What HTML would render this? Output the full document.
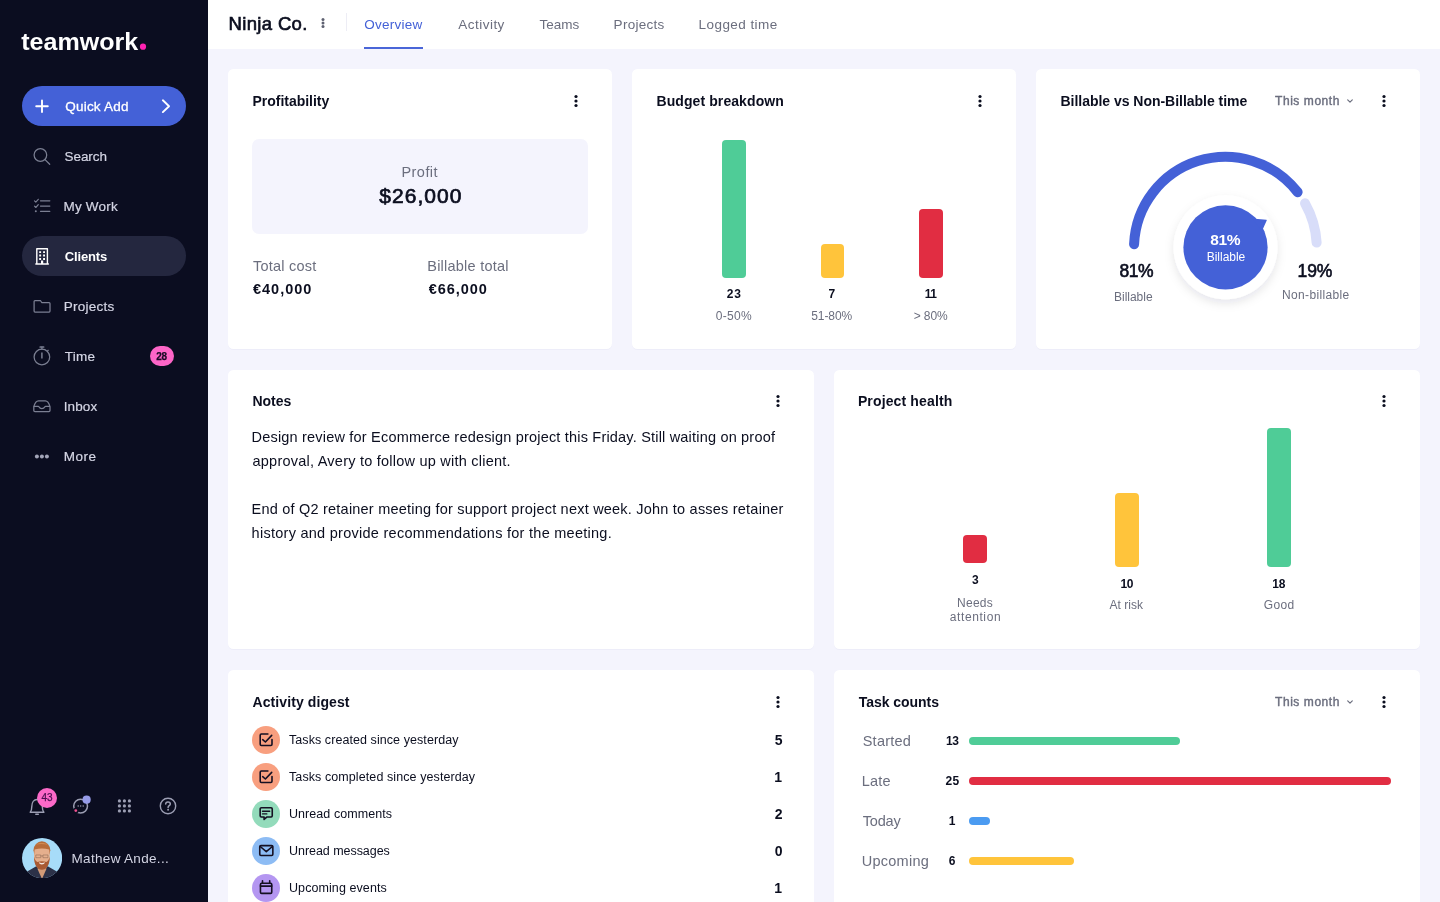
<!DOCTYPE html>
<html>
<head>
<meta charset="utf-8">
<title>Ninja Co. - Overview</title>
<style>
*{box-sizing:border-box;margin:0;padding:0}
html,body{width:1440px;height:902px;overflow:hidden;background:#f4f4fd;font-family:"Liberation Sans",sans-serif;color:#0b0e1f}
.abs{position:absolute;display:block}
.t{position:absolute;white-space:nowrap;line-height:1}
</style>
</head>
<body>
<div id="root" style="position:absolute;left:0;top:0;width:1440px;height:902px;overflow:hidden;will-change:transform">
<!-- sidebar -->
<div class="abs" style="left:0px;top:0px;width:208.00px;height:902.00px;background:#0b0d20;border-radius:0px;"></div>
<svg class="abs" style="left:0px;top:20px;" width="208" height="40" viewBox="0 0 208 40"><text x="21.2" y="29.8" font-family="Liberation Sans, sans-serif" font-weight="bold" font-size="24.5" fill="#fff" textLength="117" lengthAdjust="spacingAndGlyphs">teamwork</text><circle cx="143" cy="26.7" r="3.1" fill="#ff22b1"/></svg>
<div class="abs" style="left:22px;top:86px;width:164.00px;height:40.00px;background:#4461d7;border-radius:20px;"></div>
<svg class="abs" style="left:30px;top:94px;" width="24" height="24" viewBox="0 0 24 24"><path d="M12 6.4v11.6M6.2 12.2h11.6" stroke="#fff" stroke-width="1.9" stroke-linecap="round" fill="none"/></svg>
<svg class="abs" style="left:156px;top:94px;" width="20" height="24" viewBox="0 0 20 24"><path d="M6.85 6.3l6.2 5.9-6.2 5.9" stroke="#fff" stroke-width="1.9" stroke-linecap="round" stroke-linejoin="round" fill="none"/></svg>
<svg class="abs" style="left:30px;top:144px;" width="24" height="24" viewBox="0 0 24 24"><circle cx="10.4" cy="11" r="6.3" stroke="#7b7f92" stroke-width="1.25" fill="none"/><path d="M15 15.6l4.7 4.7" stroke="#7b7f92" stroke-width="1.25" stroke-linecap="round"/></svg>
<svg class="abs" style="left:30px;top:194px;" width="24" height="24" viewBox="0 0 24 24"><path d="M10.5 6.8h9.3M10.5 12.1h9.3M10.5 17.3h9.3" stroke="#7b7f92" stroke-width="1.3" stroke-linecap="round"/><path d="M4.5 6.9l1.3 1.3 2.5-2.9M4.5 12.2l1.3 1.3 2.5-2.9" stroke="#7b7f92" stroke-width="1.15" fill="none" stroke-linecap="round" stroke-linejoin="round"/><circle cx="5.8" cy="17.3" r="1" fill="#7b7f92"/></svg>
<div class="abs" style="left:22px;top:236px;width:164.00px;height:40.20px;background:#24273f;border-radius:20px;"></div>
<svg class="abs" style="left:30px;top:244px;" width="24" height="24" viewBox="0 0 24 24"><path d="M6.8 20V4.7h10.6V20" stroke="#fff" stroke-width="1.4" fill="none" stroke-linejoin="round"/><path d="M5.9 20.1h12.4" stroke="#fff" stroke-width="1.5" stroke-linecap="round"/><path d="M9.2 7.2h1.9v1.9H9.2zM13.1 7.2H15v1.9h-1.9zM9.2 10.6h1.9v1.9H9.2zM13.1 10.6H15v1.9h-1.9zM9.2 14h1.9v1.9H9.2zM13.1 14H15v1.9h-1.9zM11 16.4h2.2V20H11z" fill="#fff"/></svg>
<svg class="abs" style="left:30px;top:294px;" width="24" height="24" viewBox="0 0 24 24"><path d="M4.1 8V7.4c0-.5.4-.9.9-.9h5.4l1.3 2h7.4c.5 0 .9.4.9.9v7.7c0 .5-.4.9-.9.9H5c-.5 0-.9-.4-.9-.9z" stroke="#7b7f92" stroke-width="1.25" fill="none" stroke-linejoin="round"/></svg>
<svg class="abs" style="left:30px;top:342px;" width="24" height="28" viewBox="0 0 24 28"><circle cx="11.9" cy="15" r="7.8" stroke="#7b7f92" stroke-width="1.25" fill="none"/><path d="M11.9 10.6v6" stroke="#7b7f92" stroke-width="1.5" stroke-linecap="butt"/><path d="M10.2 5h3.4" stroke="#7b7f92" stroke-width="1.7" stroke-linecap="round"/><path d="M11.9 5v2.2M17.6 8.9l.6-.6" stroke="#7b7f92" stroke-width="1.25" stroke-linecap="round"/></svg>
<div class="abs" style="left:150px;top:346.2px;width:24.00px;height:20.10px;background:#fd65c7;border-radius:10.1px;"></div>
<svg class="abs" style="left:30px;top:394px;" width="24" height="24" viewBox="0 0 24 24"><path d="M3.8 12.6C4.7 9.6 6.3 6.9 8.5 6.9h6.8c2.2 0 3.8 2.7 4.7 5.7v4c0 .6-.5 1.1-1.1 1.1H4.9c-.6 0-1.1-.5-1.1-1.1z" stroke="#7b7f92" stroke-width="1.25" fill="none" stroke-linejoin="round"/><path d="M3.8 12.3h4.3c.5 0 .8.3 1 .7.5 1 1.4 1.5 2.8 1.5s2.3-.5 2.8-1.5c.2-.4.5-.7 1-.7H20" stroke="#7b7f92" stroke-width="1.25" fill="none" stroke-linejoin="round"/></svg>
<svg class="abs" style="left:30px;top:450px;" width="24" height="12" viewBox="0 0 24 12"><circle cx="6.899999999999999" cy="6.6" r="2" fill="#a3a5b8"/><circle cx="11.899999999999999" cy="6.6" r="2" fill="#a3a5b8"/><circle cx="16.9" cy="6.6" r="2" fill="#a3a5b8"/></svg>
<svg class="abs" style="left:24px;top:790px;" width="32" height="32" viewBox="0 0 32 32"><path d="M6.2 22.2c1.2-1.2 1.6-2.6 1.6-5.6 0-4.2 2.2-7.1 5.25-7.1s5.25 2.9 5.25 7.1c0 3 .4 4.4 1.6 5.6z" stroke="#9c9eb3" stroke-width="1.4" fill="none" stroke-linejoin="round"/><path d="M11.8 24.3h2.5" stroke="#9c9eb3" stroke-width="1.5" stroke-linecap="round"/></svg>
<div class="abs" style="left:37px;top:787.8px;width:20.20px;height:20.00px;background:#fb69c8;border-radius:10.1px;"></div>
<svg class="abs" style="left:66px;top:790px;" width="32" height="32" viewBox="0 0 32 32"><circle cx="14.6" cy="16.1" r="6.9" stroke="#9c9eb3" stroke-width="1.5" fill="none"/><circle cx="12.2" cy="15.9" r=".75" fill="#9c9eb3"/><circle cx="14.7" cy="15.9" r=".75" fill="#9c9eb3"/><circle cx="17.2" cy="15.9" r=".75" fill="#9c9eb3"/><circle cx="9.8" cy="20.6" r="2.2" fill="#f0508f" stroke="#0b0d20" stroke-width="1.5"/><circle cx="20.6" cy="9.7" r="4.1" fill="#979ce9"/></svg>
<svg class="abs" style="left:112px;top:794px;" width="24" height="24" viewBox="0 0 24 24"><circle cx="7.4" cy="6.9" r="1.6" fill="#9c9eb3"/><circle cx="7.4" cy="11.9" r="1.6" fill="#9c9eb3"/><circle cx="7.4" cy="16.9" r="1.6" fill="#9c9eb3"/><circle cx="12.4" cy="6.9" r="1.6" fill="#9c9eb3"/><circle cx="12.4" cy="11.9" r="1.6" fill="#9c9eb3"/><circle cx="12.4" cy="16.9" r="1.6" fill="#9c9eb3"/><circle cx="17.4" cy="6.9" r="1.6" fill="#9c9eb3"/><circle cx="17.4" cy="11.9" r="1.6" fill="#9c9eb3"/><circle cx="17.4" cy="16.9" r="1.6" fill="#9c9eb3"/></svg>
<svg class="abs" style="left:156px;top:794px;" width="24" height="24" viewBox="0 0 24 24"><circle cx="12" cy="12" r="7.7" stroke="#9c9eb3" stroke-width="1.4" fill="none"/><path d="M9.7 10.1c0-1.3 1-2.2 2.3-2.2s2.3.9 2.3 2.1c0 1.7-2.2 1.7-2.2 3.4" stroke="#9c9eb3" stroke-width="1.5" fill="none" stroke-linecap="round"/><circle cx="12.1" cy="15.8" r=".95" fill="#9c9eb3"/></svg>
<svg class="abs" style="left:21.9px;top:837.9px;" width="40.2" height="40.2" viewBox="0 0 40.2 40.2"><defs><clipPath id="av"><circle cx="20.1" cy="20.1" r="20.1"/></clipPath></defs><g clip-path="url(#av)"><rect width="41" height="41" fill="#a7dcf9"/><path d="M0 41v-4.5l6.5-3.8 7.8-4.4L20 33l5.7-4.7 7.8 4.4 6.5 3.8V41z" fill="#2c3148"/><path d="M15.3 26h9.4l-.5 5.5L20 41l-4.2-9.5z" fill="#d29a77"/><ellipse cx="19.9" cy="12.2" rx="8.4" ry="8.9" fill="#b86d3b"/><path d="M12.6 11.6Q19.9 9.6 27.2 11.6L27.8 18c0 7.5-3.5 12.2-7.9 12.2S12 25.5 12 18z" fill="#e5af8d"/><path d="M14 6.5c2-2 9.5-2.3 11.8.3-3.5-1-8-1.2-11.8-.3z" fill="#cf8a52"/><path d="M12 18.5c0 8.5 3.2 13.3 7.9 13.3s7.9-4.8 7.9-13.3c-.9 3.4-1.9 5-3.4 5.4-3-.9-6-.9-9 0-1.5-.4-2.5-2-3.4-5.4z" fill="#a95a33"/><path d="M16.8 24.3c2.1 1 4.1 1 6.2 0-.5 1.5-1.6 2.2-3.1 2.2s-2.6-.7-3.1-2.2z" fill="#f3e6df"/><path d="M13.8 17h5v2.7h-5zM21 17h5v2.7h-5zM18.8 18h2.2" stroke="#8a6652" stroke-width=".55" fill="none"/></g></svg>
<!-- topbar -->
<div class="abs" style="left:208px;top:0px;width:1232.00px;height:48.80px;background:#fff;border-radius:0px;"></div>
<svg class="abs" style="left:318.6px;top:14.2px" width="8" height="18" viewBox="0 0 8 18"><circle cx="4" cy="5.4" r="1.5" fill="#5d6070"/><circle cx="4" cy="9.0" r="1.5" fill="#5d6070"/><circle cx="4" cy="12.6" r="1.5" fill="#5d6070"/></svg>
<div class="abs" style="left:345.8px;top:12.5px;width:1.00px;height:18.50px;background:#ededf5;border-radius:0px;"></div>
<div class="abs" style="left:364.2px;top:47.3px;width:58.80px;height:1.70px;background:#4a66d8;border-radius:0px;"></div>
<!-- cards -->
<div class="abs" style="left:228px;top:69.1px;width:384.00px;height:280.10px;background:#fff;border-radius:5.5px;box-shadow:0 1px 0 rgba(70,70,150,.04)"></div>
<div class="abs" style="left:632px;top:69.1px;width:384.00px;height:280.10px;background:#fff;border-radius:5.5px;box-shadow:0 1px 0 rgba(70,70,150,.04)"></div>
<div class="abs" style="left:1036px;top:69.1px;width:384.00px;height:280.10px;background:#fff;border-radius:5.5px;box-shadow:0 1px 0 rgba(70,70,150,.04)"></div>
<div class="abs" style="left:228px;top:369.6px;width:586.00px;height:279.80px;background:#fff;border-radius:5.5px;box-shadow:0 1px 0 rgba(70,70,150,.04)"></div>
<div class="abs" style="left:834px;top:369.6px;width:586.00px;height:279.80px;background:#fff;border-radius:5.5px;box-shadow:0 1px 0 rgba(70,70,150,.04)"></div>
<div class="abs" style="left:228px;top:669.8px;width:586.00px;height:280.20px;background:#fff;border-radius:5.5px;box-shadow:0 1px 0 rgba(70,70,150,.04)"></div>
<div class="abs" style="left:834px;top:669.8px;width:586.00px;height:280.20px;background:#fff;border-radius:5.5px;box-shadow:0 1px 0 rgba(70,70,150,.04)"></div>
<svg class="abs" style="left:572.25px;top:92.3px" width="8" height="18" viewBox="0 0 8 18"><circle cx="4" cy="4.5" r="1.6" fill="#0b0e1f"/><circle cx="4" cy="9.0" r="1.6" fill="#0b0e1f"/><circle cx="4" cy="13.5" r="1.6" fill="#0b0e1f"/></svg>
<svg class="abs" style="left:976px;top:92.3px" width="8" height="18" viewBox="0 0 8 18"><circle cx="4" cy="4.5" r="1.6" fill="#0b0e1f"/><circle cx="4" cy="9.0" r="1.6" fill="#0b0e1f"/><circle cx="4" cy="13.5" r="1.6" fill="#0b0e1f"/></svg>
<svg class="abs" style="left:1380px;top:92.3px" width="8" height="18" viewBox="0 0 8 18"><circle cx="4" cy="4.5" r="1.6" fill="#0b0e1f"/><circle cx="4" cy="9.0" r="1.6" fill="#0b0e1f"/><circle cx="4" cy="13.5" r="1.6" fill="#0b0e1f"/></svg>
<svg class="abs" style="left:773.9px;top:392.4px" width="8" height="18" viewBox="0 0 8 18"><circle cx="4" cy="4.5" r="1.6" fill="#0b0e1f"/><circle cx="4" cy="9.0" r="1.6" fill="#0b0e1f"/><circle cx="4" cy="13.5" r="1.6" fill="#0b0e1f"/></svg>
<svg class="abs" style="left:1380px;top:392.4px" width="8" height="18" viewBox="0 0 8 18"><circle cx="4" cy="4.5" r="1.6" fill="#0b0e1f"/><circle cx="4" cy="9.0" r="1.6" fill="#0b0e1f"/><circle cx="4" cy="13.5" r="1.6" fill="#0b0e1f"/></svg>
<svg class="abs" style="left:773.9px;top:692.7px" width="8" height="18" viewBox="0 0 8 18"><circle cx="4" cy="4.5" r="1.6" fill="#0b0e1f"/><circle cx="4" cy="9.0" r="1.6" fill="#0b0e1f"/><circle cx="4" cy="13.5" r="1.6" fill="#0b0e1f"/></svg>
<svg class="abs" style="left:1380px;top:692.7px" width="8" height="18" viewBox="0 0 8 18"><circle cx="4" cy="4.5" r="1.6" fill="#0b0e1f"/><circle cx="4" cy="9.0" r="1.6" fill="#0b0e1f"/><circle cx="4" cy="13.5" r="1.6" fill="#0b0e1f"/></svg>
<div class="abs" style="left:252px;top:139.1px;width:336.00px;height:94.70px;background:#f4f4fd;border-radius:7px;"></div>
<div class="abs" style="left:722.4px;top:140px;width:23.90px;height:138.00px;background:#4fcc97;border-radius:4px;"></div>
<div class="abs" style="left:820.6px;top:243.8px;width:23.90px;height:34.20px;background:#ffc43b;border-radius:4px;"></div>
<div class="abs" style="left:919.2px;top:209.2px;width:23.90px;height:68.80px;background:#e12d42;border-radius:4px;"></div>
<div class="abs" style="left:963px;top:535.3px;width:24.00px;height:28.00px;background:#e12d42;border-radius:4px;"></div>
<div class="abs" style="left:1115px;top:492.6px;width:24.10px;height:74.80px;background:#ffc43b;border-radius:4px;"></div>
<div class="abs" style="left:1266.8px;top:427.6px;width:24.20px;height:139.80px;background:#4fcc97;border-radius:4px;"></div>
<svg class="abs" style="left:1346px;top:98px;" width="8" height="6" viewBox="0 0 8 6"><path d="M1.7 1.8L4 4.1l2.3-2.3" stroke="#6b6e7e" stroke-width="1.2" fill="none" stroke-linecap="round" stroke-linejoin="round"/></svg>
<svg class="abs" style="left:1346px;top:698.8px;" width="8" height="6" viewBox="0 0 8 6"><path d="M1.7 1.8L4 4.1l2.3-2.3" stroke="#6b6e7e" stroke-width="1.2" fill="none" stroke-linecap="round" stroke-linejoin="round"/></svg>
<svg class="abs" style="left:1100px;top:130px;" width="250" height="200" viewBox="0 0 250 200"><defs><filter id="sh" x="-40%" y="-40%" width="180%" height="180%"><feDropShadow dx="0" dy="4" stdDeviation="5" flood-color="#101430" flood-opacity="0.10"/></filter></defs><path d="M34.09 114.21A91.4 91.4 0 0 1 197.62 62.18" stroke="#4461d7" stroke-width="10" fill="none" stroke-linecap="round"/><path d="M205.03 73.33A91.4 91.4 0 0 1 216.63 112.62" stroke="#d8ddf9" stroke-width="10" fill="none" stroke-linecap="round"/><circle cx="125.5" cy="117.3" r="52" fill="#fff" filter="url(#sh)"/><circle cx="125.5" cy="117.3" r="42.1" fill="#4461d7"/><path d="M152 88.6L166.29999999999995 89.8q.8 .1 .4 .8L162 101z" fill="#4461d7"/></svg>
<div class="abs" style="left:252px;top:725.8px;width:28.00px;height:28.00px;background:#f89f7f;border-radius:14px;"></div>
<div class="abs" style="left:252px;top:762.9px;width:28.00px;height:28.00px;background:#f89f7f;border-radius:14px;"></div>
<div class="abs" style="left:252px;top:799.9px;width:28.00px;height:28.00px;background:#93dbbb;border-radius:14px;"></div>
<div class="abs" style="left:252px;top:837px;width:28.00px;height:28.00px;background:#8dbcf4;border-radius:14px;"></div>
<div class="abs" style="left:252px;top:874px;width:28.00px;height:28.00px;background:#b496f1;border-radius:14px;"></div>
<svg class="abs" style="left:256px;top:729.8px;" width="20" height="20" viewBox="0 0 20 20"><path d="M11.9 4H5.4c-.66 0-1.2.54-1.2 1.2v9.1c0 .66.54 1.2 1.2 1.2h9.4c.66 0 1.2-.54 1.2-1.2V9.5" stroke="#151022" stroke-width="1.6" fill="none" stroke-linecap="round" stroke-linejoin="round"/><path d="M6.7 9.7l2.7 2.3 6.3-6.6" stroke="#151022" stroke-width="1.6" fill="none" stroke-linecap="round" stroke-linejoin="round"/></svg>
<svg class="abs" style="left:256px;top:766.9px;" width="20" height="20" viewBox="0 0 20 20"><path d="M11.9 4H5.4c-.66 0-1.2.54-1.2 1.2v9.1c0 .66.54 1.2 1.2 1.2h9.4c.66 0 1.2-.54 1.2-1.2V9.5" stroke="#151022" stroke-width="1.6" fill="none" stroke-linecap="round" stroke-linejoin="round"/><path d="M6.7 9.7l2.7 2.3 6.3-6.6" stroke="#151022" stroke-width="1.6" fill="none" stroke-linecap="round" stroke-linejoin="round"/></svg>
<svg class="abs" style="left:256px;top:803.9px;" width="20" height="20" viewBox="0 0 20 20"><path d="M4.15 4.95c0-.66.54-1.2 1.2-1.2h9.7c.66 0 1.2.54 1.2 1.2v6.9c0 .66-.54 1.2-1.2 1.2h-4.3L8.1 15.4v-2.35H5.35c-.66 0-1.2-.54-1.2-1.2z" stroke="#151022" stroke-width="1.6" fill="none" stroke-linecap="round" stroke-linejoin="round"/><path d="M6.5 7.3h7.2M6.5 9.9h4.3" stroke="#151022" stroke-width="1.4" stroke-linecap="round"/></svg>
<svg class="abs" style="left:256px;top:841px;" width="20" height="20" viewBox="0 0 20 20"><rect x="3.75" y="4.65" width="13.1" height="9.9" rx="1.2" stroke="#151022" stroke-width="1.6" fill="none" stroke-linecap="round" stroke-linejoin="round"/><path d="M4.2 5.5l6.1 5.2 6.1-5.2" stroke="#151022" stroke-width="1.6" fill="none" stroke-linecap="round" stroke-linejoin="round"/></svg>
<svg class="abs" style="left:256px;top:878px;" width="20" height="20" viewBox="0 0 20 20"><rect x="4.45" y="5.25" width="11.3" height="10.1" rx="1.2" stroke="#151022" stroke-width="1.6" fill="none" stroke-linecap="round" stroke-linejoin="round"/><path d="M4.45 8.1h11.3M6.5 2.8v2.4M13.7 2.8v2.4" stroke="#151022" stroke-width="1.6" fill="none" stroke-linecap="round" stroke-linejoin="round"/></svg>
<div class="abs" style="left:968.7px;top:736.6999999999999px;width:211.20px;height:8.20px;background:#4fcc97;border-radius:4.1px;"></div>
<div class="abs" style="left:968.7px;top:776.8px;width:422.60px;height:8.20px;background:#e12d42;border-radius:4.1px;"></div>
<div class="abs" style="left:968.7px;top:816.9px;width:21.50px;height:8.20px;background:#4b9bf1;border-radius:4.1px;"></div>
<div class="abs" style="left:968.7px;top:856.8px;width:105.80px;height:8.20px;background:#ffc43b;border-radius:4.1px;"></div>
<div class="t" style="left:65.20px;top:100.10px;font-size:13.5px;color:#fff;letter-spacing:0.229px;-webkit-text-stroke:.3px #fff;">Quick Add</div>
<div class="t" style="left:64.40px;top:150.30px;font-size:13.5px;color:#d4d5e4;letter-spacing:-0.013px;-webkit-text-stroke:.2px #d4d5e4;">Search</div>
<div class="t" style="left:63.40px;top:200.30px;font-size:13.5px;color:#d4d5e4;letter-spacing:0.242px;-webkit-text-stroke:.2px #d4d5e4;">My Work</div>
<div class="t" style="left:64.75px;top:250.10px;font-size:13px;color:#fff;font-weight:bold;letter-spacing:-0.160px;">Clients</div>
<div class="t" style="left:63.75px;top:300.40px;font-size:13.5px;color:#d4d5e4;letter-spacing:0.233px;-webkit-text-stroke:.2px #d4d5e4;">Projects</div>
<div class="t" style="left:64.75px;top:350.40px;font-size:13.5px;color:#d4d5e4;letter-spacing:0.220px;-webkit-text-stroke:.2px #d4d5e4;">Time</div>
<div class="t" style="left:63.75px;top:400.40px;font-size:13.5px;color:#d4d5e4;letter-spacing:0.119px;-webkit-text-stroke:.2px #d4d5e4;">Inbox</div>
<div class="t" style="left:63.75px;top:450.40px;font-size:13.5px;color:#d4d5e4;letter-spacing:0.467px;-webkit-text-stroke:.2px #d4d5e4;">More</div>
<div class="t" style="left:156.29px;top:352.00px;font-size:10px;color:#1a0a26;font-weight:bold;letter-spacing:-0.400px;-webkit-text-stroke:.25px #1a0a26;">28</div>
<div class="t" style="left:41.50px;top:793.30px;font-size:10px;color:#4a1050;letter-spacing:0.038px;-webkit-text-stroke:.25px #4a1050;">43</div>
<div class="t" style="left:71.50px;top:852.10px;font-size:13.5px;color:#d4d5e4;letter-spacing:0.323px;">Mathew Ande...</div>
<div class="t" style="left:228.60px;top:15.20px;font-size:18.5px;color:#0b0e1f;letter-spacing:0.338px;-webkit-text-stroke:.65px #0b0e1f;">Ninja Co.</div>
<div class="t" style="left:364.20px;top:17.50px;font-size:13.5px;color:#4461d7;letter-spacing:0.255px;">Overview</div>
<div class="t" style="left:458.30px;top:17.50px;font-size:13.5px;color:#6b6e7e;letter-spacing:0.471px;">Activity</div>
<div class="t" style="left:539.60px;top:17.50px;font-size:13.5px;color:#6b6e7e;">Teams</div>
<div class="t" style="left:613.60px;top:17.50px;font-size:13.5px;color:#6b6e7e;letter-spacing:0.283px;">Projects</div>
<div class="t" style="left:698.60px;top:17.50px;font-size:13.5px;color:#6b6e7e;letter-spacing:0.431px;">Logged time</div>
<div class="t" style="left:252.50px;top:94.20px;font-size:14px;color:#0b0e1f;font-weight:bold;letter-spacing:-0.018px;">Profitability</div>
<div class="t" style="left:401.50px;top:165.00px;font-size:14.5px;color:#6b6e7e;letter-spacing:0.437px;">Profit</div>
<div class="t" style="left:379.25px;top:185.00px;font-size:21px;color:#0b0e1f;letter-spacing:1.045px;-webkit-text-stroke:.7px #0b0e1f;">$26,000</div>
<div class="t" style="left:253.00px;top:258.50px;font-size:14.5px;color:#6b6e7e;letter-spacing:0.225px;">Total cost</div>
<div class="t" style="left:253.00px;top:281.75px;font-size:14.5px;color:#0b0e1f;font-weight:bold;letter-spacing:0.983px;">€40,000</div>
<div class="t" style="left:427.25px;top:258.50px;font-size:14.5px;color:#6b6e7e;letter-spacing:0.234px;">Billable total</div>
<div class="t" style="left:428.75px;top:281.75px;font-size:14.5px;color:#0b0e1f;font-weight:bold;letter-spacing:0.942px;">€66,000</div>
<div class="t" style="left:656.50px;top:94.20px;font-size:14px;color:#0b0e1f;font-weight:bold;letter-spacing:0.086px;">Budget breakdown</div>
<div class="t" style="left:726.75px;top:288.25px;font-size:12px;color:#0b0e1f;font-weight:bold;letter-spacing:0.826px;">23</div>
<div class="t" style="left:715.75px;top:310.00px;font-size:12px;color:#6b6e7e;letter-spacing:0.308px;">0-50%</div>
<div class="t" style="left:828.62px;top:288.25px;font-size:12px;color:#0b0e1f;font-weight:bold;">7</div>
<div class="t" style="left:811.25px;top:310.00px;font-size:12px;color:#6b6e7e;letter-spacing:-0.088px;">51-80%</div>
<div class="t" style="left:924.69px;top:288.25px;font-size:12px;color:#0b0e1f;font-weight:bold;letter-spacing:-0.400px;">11</div>
<div class="t" style="left:913.75px;top:310.00px;font-size:12px;color:#6b6e7e;letter-spacing:-0.110px;">&gt; 80%</div>
<div class="t" style="left:1060.50px;top:94.20px;font-size:14px;color:#0b0e1f;font-weight:bold;letter-spacing:-0.025px;">Billable vs Non-Billable time</div>
<div class="t" style="left:1275.00px;top:95.10px;font-size:12px;color:#6b6e7e;letter-spacing:0.563px;-webkit-text-stroke:.4px #6b6e7e;">This month</div>
<div class="t" style="left:1210.28px;top:232.30px;font-size:15.5px;color:#fff;font-weight:bold;letter-spacing:-0.400px;">81%</div>
<div class="t" style="left:1206.75px;top:251.30px;font-size:12px;color:#fff;letter-spacing:-0.024px;">Billable</div>
<div class="t" style="left:1119.42px;top:263.20px;font-size:17.5px;color:#0b0e1f;letter-spacing:-0.400px;-webkit-text-stroke:.6px #0b0e1f;">81%</div>
<div class="t" style="left:1114.00px;top:290.60px;font-size:12px;color:#6b6e7e;letter-spacing:-0.017px;">Billable</div>
<div class="t" style="left:1297.50px;top:263.20px;font-size:17.5px;color:#0b0e1f;letter-spacing:-0.083px;-webkit-text-stroke:.6px #0b0e1f;">19%</div>
<div class="t" style="left:1282.00px;top:289.00px;font-size:12px;color:#6b6e7e;letter-spacing:0.355px;">Non-billable</div>
<div class="t" style="left:252.50px;top:394.20px;font-size:14px;color:#0b0e1f;font-weight:bold;letter-spacing:-0.028px;">Notes</div>
<div class="t" style="left:251.60px;top:430.30px;font-size:14.5px;color:#0b0e1f;letter-spacing:0.191px;">Design review for Ecommerce redesign project this Friday. Still waiting on proof</div>
<div class="t" style="left:252.50px;top:454.25px;font-size:14.5px;color:#0b0e1f;letter-spacing:0.234px;">approval, Avery to follow up with client.</div>
<div class="t" style="left:251.60px;top:502.20px;font-size:14.5px;color:#0b0e1f;letter-spacing:0.213px;">End of Q2 retainer meeting for support project next week. John to asses retainer</div>
<div class="t" style="left:251.60px;top:526.10px;font-size:14.5px;color:#0b0e1f;letter-spacing:0.266px;">history and provide recommendations for the meeting.</div>
<div class="t" style="left:857.90px;top:394.20px;font-size:14px;color:#0b0e1f;font-weight:bold;letter-spacing:0.140px;">Project health</div>
<div class="t" style="left:971.88px;top:573.65px;font-size:12px;color:#0b0e1f;font-weight:bold;">3</div>
<div class="t" style="left:957.10px;top:596.70px;font-size:12px;color:#6b6e7e;letter-spacing:0.253px;">Needs</div>
<div class="t" style="left:949.80px;top:610.75px;font-size:12px;color:#6b6e7e;letter-spacing:0.592px;">attention</div>
<div class="t" style="left:1120.41px;top:577.70px;font-size:12px;color:#0b0e1f;font-weight:bold;letter-spacing:-0.400px;">10</div>
<div class="t" style="left:1109.60px;top:599.40px;font-size:12px;color:#6b6e7e;letter-spacing:0.011px;">At risk</div>
<div class="t" style="left:1272.36px;top:577.70px;font-size:12px;color:#0b0e1f;font-weight:bold;letter-spacing:-0.400px;">18</div>
<div class="t" style="left:1263.70px;top:599.40px;font-size:12px;color:#6b6e7e;letter-spacing:0.373px;">Good</div>
<div class="t" style="left:252.50px;top:694.50px;font-size:14px;color:#0b0e1f;font-weight:bold;letter-spacing:0.091px;">Activity digest</div>
<div class="t" style="left:289.00px;top:734.00px;font-size:12.5px;color:#0b0e1f;letter-spacing:0.072px;">Tasks created since yesterday</div>
<div class="t" style="left:289.00px;top:771.00px;font-size:12.5px;color:#0b0e1f;letter-spacing:0.088px;">Tasks completed since yesterday</div>
<div class="t" style="left:289.00px;top:808.00px;font-size:12.5px;color:#0b0e1f;letter-spacing:0.059px;">Unread comments</div>
<div class="t" style="left:289.00px;top:845.00px;font-size:12.5px;color:#0b0e1f;letter-spacing:-0.042px;">Unread messages</div>
<div class="t" style="left:289.00px;top:882.00px;font-size:12.5px;color:#0b0e1f;letter-spacing:0.084px;">Upcoming events</div>
<div class="t" style="left:774.80px;top:732.60px;font-size:14px;color:#0b0e1f;font-weight:bold;">5</div>
<div class="t" style="left:774.15px;top:769.60px;font-size:14px;color:#0b0e1f;font-weight:bold;">1</div>
<div class="t" style="left:774.80px;top:806.60px;font-size:14px;color:#0b0e1f;font-weight:bold;">2</div>
<div class="t" style="left:774.80px;top:843.60px;font-size:14px;color:#0b0e1f;font-weight:bold;">0</div>
<div class="t" style="left:774.15px;top:880.60px;font-size:14px;color:#0b0e1f;font-weight:bold;">1</div>
<div class="t" style="left:858.75px;top:694.50px;font-size:14px;color:#0b0e1f;font-weight:bold;letter-spacing:-0.041px;">Task counts</div>
<div class="t" style="left:1275.00px;top:695.90px;font-size:12px;color:#6b6e7e;letter-spacing:0.563px;-webkit-text-stroke:.4px #6b6e7e;">This month</div>
<div class="t" style="left:862.70px;top:734.00px;font-size:14.5px;color:#6b6e7e;letter-spacing:0.244px;">Started</div>
<div class="t" style="left:945.90px;top:734.90px;font-size:12px;color:#0b0e1f;font-weight:bold;letter-spacing:-0.374px;">13</div>
<div class="t" style="left:861.70px;top:774.00px;font-size:14.5px;color:#6b6e7e;letter-spacing:0.214px;">Late</div>
<div class="t" style="left:945.40px;top:774.90px;font-size:12px;color:#0b0e1f;font-weight:bold;letter-spacing:0.526px;">25</div>
<div class="t" style="left:862.70px;top:814.00px;font-size:14.5px;color:#6b6e7e;letter-spacing:-0.161px;">Today</div>
<div class="t" style="left:948.73px;top:814.90px;font-size:12px;color:#0b0e1f;font-weight:bold;">1</div>
<div class="t" style="left:861.70px;top:854.00px;font-size:14.5px;color:#6b6e7e;letter-spacing:0.269px;">Upcoming</div>
<div class="t" style="left:948.85px;top:854.90px;font-size:12px;color:#0b0e1f;font-weight:bold;">6</div>
</div>
</body>
</html>
